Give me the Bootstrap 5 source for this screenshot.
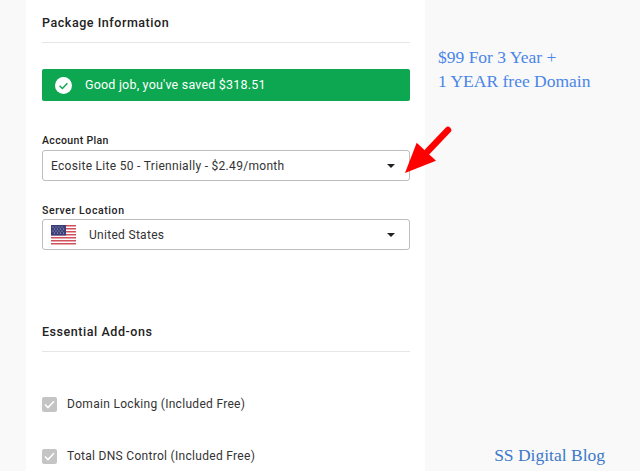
<!DOCTYPE html>
<html lang="en">
<head>
<meta charset="utf-8">
<title>Package Information</title>
<link href="https://cdn.jsdelivr.net/npm/bootstrap@5.3.0/dist/css/bootstrap.min.css" rel="stylesheet">
<style>
html,body{height:471px;overflow:hidden;}
body{background:#f9f9f9;font-family:Roboto,"Liberation Sans",sans-serif;color:#212121;position:relative;}
.stage{height:471px;}
.panel{margin-left:26px;width:399px;height:471px;background:#fff;padding:15px 15px 0 16px;flex:none;overflow:hidden;}
.sec-title{font-size:12.5px;font-weight:500;letter-spacing:.55px;line-height:15px;color:#222;padding-bottom:12px;border-bottom:1px solid #e6e6e6;margin:0;}
.saved{height:32px;margin-top:26px;background:#0ca750;border-radius:2px;color:#fff;font-size:12.5px;letter-spacing:.2px;padding-left:13px;gap:13px;}
.saved svg{flex:none;}
.fld-label{font-size:10.5px;font-weight:500;letter-spacing:.35px;line-height:13px;color:#222;margin:0 0 3px;display:block;}
.loc .fld-label{letter-spacing:.6px;margin-bottom:2px;}
.fld-box{height:31px;border:1px solid #bdbdbd;border-radius:3px;padding:0 14px 0 8px;font-size:12px;letter-spacing:.3px;color:#333;}
.caret-mark{width:0;height:0;border-left:4px solid transparent;border-right:4px solid transparent;border-top:4px solid #222;margin-left:auto;}
.plan{margin-top:33px;}
.loc{margin-top:23px;}
.flag{width:25px;height:20px;margin-right:13px;flex:none;}
.addons{margin-top:74px;}
.chk{font-size:12px;letter-spacing:.3px;color:#333;gap:10px;line-height:15px;}
.chk-first{margin-top:45px;}
.chk-next{margin-top:37px;}
.tick{width:15px;height:15px;background:#c4c4c4;border-radius:2px;flex:none;}
.notes{flex:1;font-family:"Liberation Serif",serif;color:#4a86e8;font-size:17.5px;line-height:23.5px;padding:46px 0 0 13px;}
.note-foot{margin:auto 35px 6px 0;text-align:right;color:#3d78c8;font-size:17.5px;line-height:20px;}
.red-arrow{position:absolute;left:402px;top:124px;}
</style>
</head>
<body>
<div class="stage d-flex">
  <div class="panel">
    <h2 class="sec-title">Package Information</h2>
    <div class="saved d-flex align-items-center">
      <svg width="17" height="17" viewBox="0 0 17 17"><circle cx="8.5" cy="8.5" r="8.5" fill="#fff"/><path d="M4.6 8.8l2.8 2.7 5-5.3" fill="none" stroke="#0ca750" stroke-width="1.4"/></svg>
      <span>Good job, you've saved $318.51</span>
    </div>
    <div class="plan">
      <span class="fld-label">Account Plan</span>
      <div class="fld-box d-flex align-items-center"><span>Ecosite Lite 50 - Triennially - $2.49/month</span><i class="caret-mark"></i></div>
    </div>
    <div class="loc">
      <span class="fld-label">Server Location</span>
      <div class="fld-box d-flex align-items-center">
        <svg class="flag" viewBox="0 0 25 20">
          <rect width="25" height="20" y="0" fill="#fff"/>
          <g fill="#d0505c"><rect width="25" height="1.5" y="0"/><rect width="25" height="1.5" y="3"/><rect width="25" height="1.5" y="6"/><rect width="25" height="1.5" y="9"/><rect width="25" height="1.5" y="12"/><rect width="25" height="1.5" y="15"/><rect width="25" height="1.5" y="18"/></g>
          <rect width="15" height="10.5" fill="#3c3f78"/>
          <g fill="#b9bcd6"><circle cx="2" cy="2" r=".6"/><circle cx="5" cy="2" r=".6"/><circle cx="8" cy="2" r=".6"/><circle cx="11" cy="2" r=".6"/><circle cx="3.5" cy="4" r=".6"/><circle cx="6.5" cy="4" r=".6"/><circle cx="9.5" cy="4" r=".6"/><circle cx="12.5" cy="4" r=".6"/><circle cx="2" cy="6" r=".6"/><circle cx="5" cy="6" r=".6"/><circle cx="8" cy="6" r=".6"/><circle cx="11" cy="6" r=".6"/><circle cx="3.5" cy="8" r=".6"/><circle cx="6.5" cy="8" r=".6"/><circle cx="9.5" cy="8" r=".6"/><circle cx="12.5" cy="8" r=".6"/></g>
        </svg>
        <span>United States</span><i class="caret-mark"></i>
      </div>
    </div>
    <h2 class="sec-title addons">Essential Add-ons</h2>
    <div class="chk chk-first d-flex align-items-center">
      <span class="tick d-flex align-items-center justify-content-center"><svg width="11" height="9" viewBox="0 0 11 9"><path d="M1 4.5l3 3 6-6.3" fill="none" stroke="#fff" stroke-width="1.6"/></svg></span>
      <span>Domain Locking (Included Free)</span>
    </div>
    <div class="chk chk-next d-flex align-items-center">
      <span class="tick d-flex align-items-center justify-content-center"><svg width="11" height="9" viewBox="0 0 11 9"><path d="M1 4.5l3 3 6-6.3" fill="none" stroke="#fff" stroke-width="1.6"/></svg></span>
      <span>Total DNS Control (Included Free)</span>
    </div>
  </div>
  <div class="notes d-flex flex-column">
    <div>$99 For 3 Year +<br>1 YEAR free Domain</div>
    <div class="note-foot">SS Digital Blog</div>
  </div>
</div>
<svg class="red-arrow" width="54" height="56" viewBox="0 0 54 56">
  <path d="M46 6L26 27" stroke="#f00" stroke-width="6.5" stroke-linecap="round" fill="none"/>
  <path d="M3 49L14.7 18.7L34 36.7Z" fill="#f00"/>
</svg>
</body>
</html>
